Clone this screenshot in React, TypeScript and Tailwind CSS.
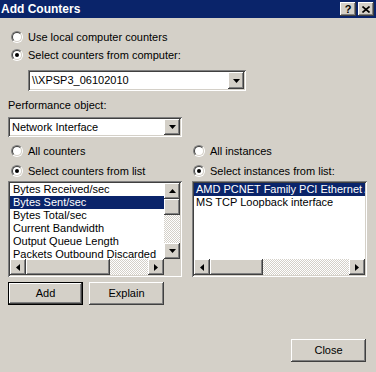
import React from 'react';

const sunken =
  'shadow-[inset_1px_1px_0_#808080,inset_-1px_-1px_0_#ffffff,inset_2px_2px_0_#404040,inset_-2px_-2px_0_#d4d0c8]';
const raised =
  'bg-[#d4d0c8] shadow-[inset_-1px_-1px_0_#404040,inset_1px_1px_0_#ffffff,inset_-2px_-2px_0_#808080,inset_2px_2px_0_#d4d0c8]';
const dither = 'bg-[repeating-conic-gradient(#d4d0c8_0_25%,#ffffff_0_50%)] bg-[length:2px_2px]';

function Arrow({ dir }: { dir: 'up' | 'down' | 'left' | 'right' }) {
  const pts = {
    down: '0,0 7,0 3.5,4',
    up: '3.5,0 7,4 0,4',
    left: '4,0 4,7 0,3.5',
    right: '0,0 4,3.5 0,7',
  }[dir];
  const horiz = dir === 'left' || dir === 'right';
  return (
    <svg width={horiz ? 4 : 7} height={horiz ? 7 : 4} viewBox={horiz ? '0 0 4 7' : '0 0 7 4'}>
      <polygon points={pts} fill="#000" />
    </svg>
  );
}

function ScrollBtn({ dir }: { dir: 'up' | 'down' | 'left' | 'right' }) {
  return (
    <div className={`w-[16px] h-[16px] shrink-0 flex items-center justify-center ${raised}`}>
      <Arrow dir={dir} />
    </div>
  );
}

function Radio({ label, checked }: { label: string; checked?: boolean }) {
  return (
    <div className="flex items-center gap-[5px]">
      <div className="w-[12px] h-[12px] rounded-full border border-t-[#808080] border-l-[#808080] border-b-white border-r-white">
        <div className="w-full h-full rounded-full border border-t-[#404040] border-l-[#404040] border-b-[#d4d0c8] border-r-[#d4d0c8] bg-white flex items-center justify-center">
          {checked && <div className="w-[4px] h-[4px] rounded-full bg-black" />}
        </div>
      </div>
      <span>{label}</span>
    </div>
  );
}

function Combo({ value, className }: { value: string; className: string }) {
  return (
    <div className={`bg-white p-[2px] flex ${sunken} ${className}`}>
      <div className="flex-1 pl-[2px] flex items-center whitespace-nowrap overflow-hidden">{value}</div>
      <div className={`w-[16px] h-full flex items-center justify-center ${raised}`}>
        <Arrow dir="down" />
      </div>
    </div>
  );
}

function Button({ label, isDefault, className }: { label: string; isDefault?: boolean; className: string }) {
  return (
    <div className={`h-[23px] w-[75px] ${isDefault ? 'border border-black' : ''} ${className}`}>
      <div className={`w-full h-full flex items-center justify-center ${raised}`}>{label}</div>
    </div>
  );
}

const counters = [
  'Bytes Received/sec',
  'Bytes Sent/sec',
  'Bytes Total/sec',
  'Current Bandwidth',
  'Output Queue Length',
  'Packets Outbound Discarded',
];

export default function App() {
  return (
    <div className="w-[376px] h-[372px] bg-[#d4d0c8] text-black text-[11px] leading-[13px] font-['Liberation_Sans',Arial,sans-serif] flex flex-col overflow-hidden">
      <div className="h-[18px] bg-[#0a246a] flex items-center justify-between pl-[1px] pr-[2px]">
        <span className="text-white font-bold text-[12px]">Add Counters</span>
        <div className="flex gap-[2px]">
          <div className={`w-[16px] h-[14px] flex items-center justify-center font-bold text-[11px] ${raised}`}>?</div>
          <div className={`w-[16px] h-[14px] flex items-center justify-center ${raised}`}>
            <svg width="8" height="7" viewBox="0 0 8 7">
              <path d="M0.5 0.5 L7.5 6.5 M7.5 0.5 L0.5 6.5" stroke="#000" strokeWidth="1.6" />
            </svg>
          </div>
        </div>
      </div>

      <div className="px-[8px] flex flex-col">
        <div className="mt-[10px] h-[18px] flex items-center pl-[3px]">
          <Radio label="Use local computer counters" />
        </div>
        <div className="h-[18px] flex items-center pl-[3px]">
          <Radio label="Select counters from computer:" checked />
        </div>
        <Combo value="\\XPSP3_06102010" className="mt-[6px] ml-[20px] w-[218px] h-[21px]" />

        <div className="mt-[8px] w-[174px]">Performance object:</div>
        <Combo value="Network Interface" className="mt-[5px] w-[174px] h-[20px]" />

        <div className="mt-[4px] grid grid-cols-[174px_175px] gap-x-[10px]">
          <div className="h-[20px] flex items-center pl-[3px]">
            <Radio label="All counters" />
          </div>
          <div className="h-[20px] flex items-center pl-[1px]">
            <Radio label="All instances" />
          </div>
          <div className="h-[20px] flex items-center pl-[3px]">
            <Radio label="Select counters from list" checked />
          </div>
          <div className="h-[20px] flex items-center pl-[1px]">
            <Radio label="Select instances from list:" checked />
          </div>

          <div className={`h-[96px] bg-white p-[2px] flex flex-col ${sunken}`}>
            <div className="h-[76px] flex">
              <div className="flex-1 overflow-hidden">
                {counters.map((c, i) => (
                  <div
                    key={c}
                    className={`h-[13px] pl-[3px] whitespace-nowrap ${i === 1 ? 'bg-[#0a246a] text-white' : ''}`}
                  >
                    {c}
                  </div>
                ))}
              </div>
              <div className="w-[16px] flex flex-col">
                <ScrollBtn dir="up" />
                <div className={`h-[16px] ${raised}`} />
                <div className={`flex-1 ${dither}`} />
                <ScrollBtn dir="down" />
              </div>
            </div>
            <div className="h-[16px] flex">
              <ScrollBtn dir="left" />
              <div className={`w-[84px] ${raised}`} />
              <div className={`flex-1 ${dither}`} />
              <ScrollBtn dir="right" />
              <div className="w-[16px] bg-[#d4d0c8]" />
            </div>
          </div>

          <div className={`h-[96px] bg-white p-[2px] flex flex-col ${sunken}`}>
            <div className="h-[76px] overflow-hidden">
              <div className="h-[13px] pl-[2px] whitespace-nowrap bg-[#0a246a] text-white">
                AMD PCNET Family PCI Ethernet Adapter
              </div>
              <div className="h-[13px] pl-[2px] whitespace-nowrap">MS TCP Loopback interface</div>
            </div>
            <div className="h-[16px] flex">
              <ScrollBtn dir="left" />
              <div className={`w-[53px] ${raised}`} />
              <div className={`flex-1 ${dither}`} />
              <ScrollBtn dir="right" />
            </div>
          </div>
        </div>

        <div className="mt-[5px] flex gap-[6px]">
          <Button label="Add" isDefault className="" />
          <Button label="Explain" className="" />
        </div>

        <div className="mt-[34px] flex justify-end pr-[2px]">
          <Button label="Close" className="" />
        </div>
      </div>
    </div>
  );
}
